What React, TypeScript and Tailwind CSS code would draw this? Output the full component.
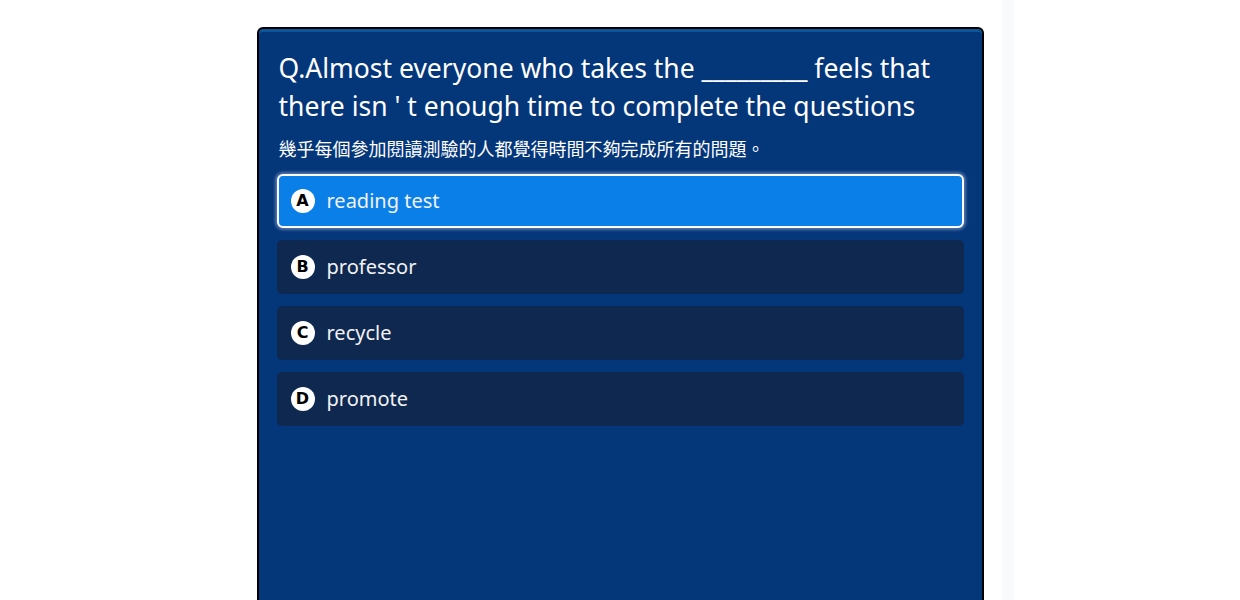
import React from "react";

const options = [
  { k: "A", t: "reading test", selected: true },
  { k: "B", t: "professor" },
  { k: "C", t: "recycle" },
  { k: "D", t: "promote" },
];

export default function App() {
  return (
    <div className="relative h-[600px] w-[1240px] overflow-hidden bg-white">
      <div className="flex justify-center pt-[27px]">
        <div
          className="h-[600px] w-[727px] rounded-t-[6px] border-2 border-black bg-[#04367a] shadow-[inset_0_3px_0_#0d5699] px-[18px] pt-[20px]"
          style={{ fontFamily: '"Noto Sans", "Noto Sans CJK TC", sans-serif' }}
        >
          <div className="pl-[2px] text-[26.5px] leading-[38px] text-white">
            Q.Almost everyone who takes the _________ feels that there isn ' t enough time to complete the questions
          </div>
          <div className="mt-[10px] pl-[2px] text-[18px] leading-[26px] text-white" style={{ fontFamily: '"Noto Sans CJK TC", sans-serif' }}>
            幾乎每個參加閱讀測驗的人都覺得時間不夠完成所有的問題。
          </div>
          <div className="mt-[13px] flex flex-col gap-[12px]">
            {options.map((o) => (
              <div
                key={o.k}
                className={
                  o.selected
                    ? "flex h-[54px] items-center gap-[12px] rounded-[6px] border-2 border-white bg-[#0b7fe8] pl-[12px] shadow-[0_0_3px_2px_rgba(150,170,210,0.55)]"
                    : "flex h-[54px] items-center gap-[12px] rounded-[5px] bg-[#0f2850] pl-[14px]"
                }
              >
                <span
                  className="flex h-[24px] w-[24px] items-center justify-center rounded-full bg-white text-[16px] font-black leading-none text-black"
                  style={{ fontFamily: '"DejaVu Sans", sans-serif' }}
                >
                  {o.k}
                </span>
                <span className="text-[20px] text-[#f2f2f2]">{o.t}</span>
              </div>
            ))}
          </div>
        </div>
      </div>
      <div className="absolute left-[1002px] top-0 h-full w-[12px] bg-[#f9fafb]" />
    </div>
  );
}
